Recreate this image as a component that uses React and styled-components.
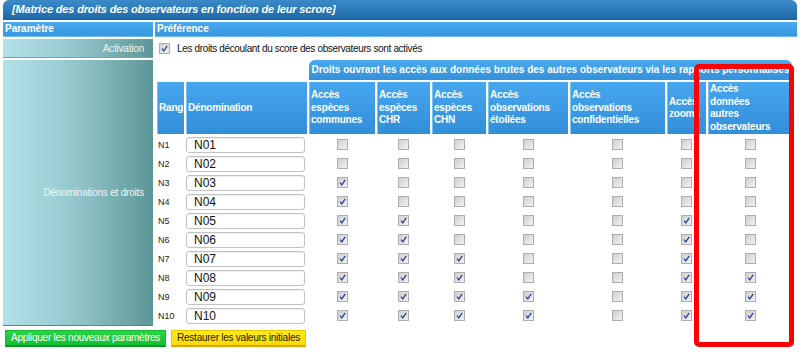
import React from 'react';
import styled, { createGlobalStyle } from 'styled-components';

const GlobalStyle = createGlobalStyle`
  html, body {
    margin: 0;
    padding: 0;
    background: #ffffff;
  }
  body {
    font-family: "Liberation Sans", Arial, sans-serif;
  }
`;

const Page = styled.div`
  position: relative;
  width: 794px;
  padding: 0 3px;
`;

const TitleBar = styled.div`
  height: 19px;
  line-height: 19px;
  padding-left: 9px;
  border-radius: 6px 6px 0 0;
  background: linear-gradient(#3a8aca, #1f6aa7);
  border-bottom: 1px solid #1a5e96;
  color: #ffffff;
  font-size: 11px;
  font-weight: bold;
  font-style: italic;
  letter-spacing: -0.16px;
`;

const Layout = styled.div`
  display: grid;
  grid-template-columns: 150px 1fr;
  gap: 2px;
  margin-top: 2px;
`;

const HeadCell = styled.div`
  height: 14px;
  line-height: 14px;
  padding-left: 2px;
  background: linear-gradient(#4aa9ee, #3698e0);
  border-bottom: 1px solid #6cbaf0;
  color: #ffffff;
  font-size: 10px;
  font-weight: bold;
`;

const LabelCell = styled.div`
  display: flex;
  align-items: center;
  justify-content: flex-end;
  min-height: 18px;
  padding-right: 9px;
  background: linear-gradient(to right, #b1e1e8 0%, #9dd0d6 35%, #88bcc0 60%, #5b9697 100%);
  border-bottom: 1px solid ${(p) => (p.tall ? '#4f8a90' : '#6ea6aa')};
  color: #eef6f6;
  font-size: 10px;
  letter-spacing: -0.2px;
`;

const OptionCell = styled.div`
  display: flex;
  align-items: center;
  gap: 7px;
  padding-left: 4px;
  font-size: 10px;
  letter-spacing: -0.35px;
  color: #111111;
`;

const Matrix = styled.table`
  border-collapse: separate;
  border-spacing: 2px;
  table-layout: fixed;
  margin-top: -2px;
  font-size: 10px;
  line-height: 12px;
`;

const Col = styled.col`
  width: ${(p) => p.w}px;
`;

const GroupTab = styled.th`
  height: 20px;
  padding: 0;
  border-radius: 6px 6px 0 0;
  background: linear-gradient(#4aa9ee, #3390da);
  color: #ffffff;
  font-size: 10px;
  font-weight: bold;
  text-align: center;
  white-space: nowrap;
  overflow: hidden;
`;

const HeadTh = styled.th`
  height: 52px;
  padding: 0 0 0 1px;
  box-sizing: border-box;
  background: linear-gradient(#46a6ee, #318fd9);
  border-left: 1px solid #7cc2f2;
  color: #ffffff;
  font-size: 10px;
  font-weight: bold;
  line-height: 12.5px;
  letter-spacing: -0.2px;
  text-align: left;
  vertical-align: middle;
  white-space: nowrap;
  overflow: hidden;
`;

const Td = styled.td`
  height: 17px;
  padding: 0;
  text-align: ${(p) => (p.center ? 'center' : 'left')};
  vertical-align: middle;
`;

const RankLabel = styled.span`
  padding-left: 1px;
  font-size: 9px;
  color: #222222;
`;

const NameInput = styled.input`
  display: block;
  width: 119px;
  height: 16px;
  margin-left: 0;
  padding: 0 0 0 7px;
  box-sizing: border-box;
  border: 1px solid #c2c2c2;
  border-radius: 3px;
  box-shadow: inset 0 1px 1px rgba(0, 0, 0, 0.07);
  font-family: "Liberation Sans", Arial, sans-serif;
  font-size: 12px;
  color: #111111;
  background: #ffffff;
`;

const CheckBox = styled.span`
  display: inline-block;
  vertical-align: middle;
  width: 11px;
  height: 11px;
  box-sizing: border-box;
  border: 1px solid #adadad;
  background: linear-gradient(135deg, #cfcfcf, #f2f2f2);
  line-height: 0;
`;

const Buttons = styled.div`
  display: flex;
  gap: 5px;
  margin-top: 4px;
  padding-left: 2px;
`;

const Button = styled.button`
  height: 17px;
  padding: 0 5px;
  border: 1px solid ${(p) => (p.tone === 'green' ? '#16b832' : '#f0c400')};
  border-bottom: 2px solid ${(p) => (p.tone === 'green' ? '#0c9424' : '#e0a000')};
  background: ${(p) =>
    p.tone === 'green'
      ? 'linear-gradient(#2ad446, #12c034)'
      : 'linear-gradient(#ffec1a, #ffd800)'};
  color: ${(p) => (p.tone === 'green' ? '#ffffff' : '#1a1a1a')};
  font-family: "Liberation Sans", Arial, sans-serif;
  font-size: 10px;
  letter-spacing: -0.25px;
  line-height: 14px;
`;

const Highlight = styled.div`
  position: absolute;
  left: 694px;
  top: 64px;
  width: 100px;
  height: 283px;
  box-sizing: border-box;
  border: 5px solid #ff0000;
  border-radius: 5px;
  pointer-events: none;
`;

function Check({ checked }) {
  return (
    <CheckBox>
      {checked && (
        <svg width="9" height="9" viewBox="0 0 9 9">
          <path
            d="M2 4.6 L3.8 6.8 L7.2 1.8"
            fill="none"
            stroke="#2a4596"
            strokeWidth="1.3"
          />
        </svg>
      )}
    </CheckBox>
  );
}

const widths = [27, 121, 66, 53, 54, 80, 95, 39, 84];

const headers = [
  ['Rang'],
  ['Dénomination'],
  ['Accès', 'espèces', 'communes'],
  ['Accès', 'espèces', 'CHR'],
  ['Accès', 'espèces', 'CHN'],
  ['Accès', 'observations', 'étoilées'],
  ['Accès', 'observations', 'confidentielles'],
  ['Accès', 'zooms'],
  ['Accès', 'données', 'autres', 'observateurs'],
];

// droits cochés par rang (colonnes 1..7)
const rights = [
  [0, 0, 0, 0, 0, 0, 0],
  [0, 0, 0, 0, 0, 0, 0],
  [1, 0, 0, 0, 0, 0, 0],
  [1, 0, 0, 0, 0, 0, 0],
  [1, 1, 0, 0, 0, 1, 0],
  [1, 1, 0, 0, 0, 1, 0],
  [1, 1, 1, 0, 0, 1, 0],
  [1, 1, 1, 0, 0, 1, 1],
  [1, 1, 1, 1, 0, 1, 1],
  [1, 1, 1, 1, 0, 1, 1],
];

export default function App() {
  return (
    <Page>
      <GlobalStyle />
      <TitleBar>[Matrice des droits des observateurs en fonction de leur scrore]</TitleBar>

      <Layout>
        <HeadCell>Paramètre</HeadCell>
        <HeadCell>Préférence</HeadCell>

        <LabelCell>Activation</LabelCell>
        <OptionCell>
          <Check checked />
          <span>Les droits découlant du score des observateurs sont activés</span>
        </OptionCell>

        <LabelCell tall>Dénominations et droits</LabelCell>
        <div>
          <Matrix>
            <colgroup>
              {widths.map((w, i) => (
                <Col key={i} w={w} />
              ))}
            </colgroup>
            <thead>
              <tr>
                <th colSpan={2} />
                <GroupTab colSpan={7}>
                  Droits ouvrant les accès aux données brutes des autres observateurs via les rapports personnalisés
                </GroupTab>
              </tr>
              <tr>
                {headers.map((lines, i) => (
                  <HeadTh key={i}>
                    {lines.map((l, j) => (
                      <React.Fragment key={j}>
                        {j > 0 && <br />}
                        {l}
                      </React.Fragment>
                    ))}
                  </HeadTh>
                ))}
              </tr>
            </thead>
            <tbody>
              {rights.map((row, r) => (
                <tr key={r}>
                  <Td>
                    <RankLabel>N{r + 1}</RankLabel>
                  </Td>
                  <Td>
                    <NameInput defaultValue={'N' + String(r + 1).padStart(2, '0')} />
                  </Td>
                  {row.map((v, c) => (
                    <Td center key={c}>
                      <Check checked={v === 1} />
                    </Td>
                  ))}
                </tr>
              ))}
            </tbody>
          </Matrix>
        </div>
      </Layout>

      <Buttons>
        <Button tone="green">Appliquer les nouveaux paramètres</Button>
        <Button tone="yellow">Restaurer les valeurs initiales</Button>
      </Buttons>

      <Highlight />
    </Page>
  );
}
